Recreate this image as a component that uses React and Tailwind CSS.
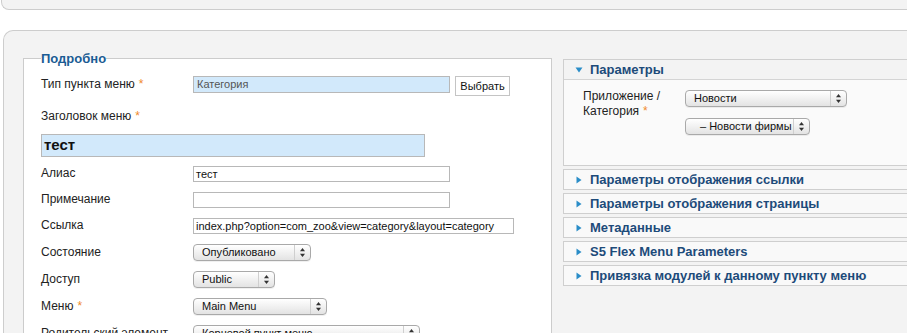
import React from "react";

const Star = () => <span className="text-[#f08a2c] text-[12px] align-top ml-[4px]">*</span>;

const Arrows = () => (
  <svg width="5" height="9" viewBox="0 0 5 9" className="block">
    <path d="M2.5 0 L5 3.2 L0 3.2 Z" fill="#333" />
    <path d="M2.5 9 L5 5.8 L0 5.8 Z" fill="#333" />
  </svg>
);

const Select = ({ w, children }) => (
  <div
    className={`relative flex h-[17px] ${w} items-center rounded-[4px] border border-[#a9a9a9] bg-gradient-to-b from-white to-[#e3e3e3] pl-[8px] text-[11px] leading-none text-[#111] shadow-[0_1px_0_rgba(0,0,0,0.06)]`}
  >
    <span className="flex-1 overflow-hidden whitespace-nowrap">{children}</span>
    <div className="flex h-full w-[16px] shrink-0 items-center justify-center border-l border-[#cfcfcf]">
      <Arrows />
    </div>
  </div>
);

const TriRight = () => (
  <svg width="6" height="8" viewBox="0 0 6 8" className="block">
    <path d="M0.5 0.5 L5.5 4 L0.5 7.5 Z" fill="#2a8dc8" />
  </svg>
);

const TriDown = () => (
  <svg width="8" height="6" viewBox="0 0 8 6" className="block">
    <path d="M0.5 0.5 L7.5 0.5 L4 5.5 Z" fill="#2a8dc8" />
  </svg>
);

const Collapsed = ({ children }) => (
  <div className="mt-[3px] flex h-[21px] items-center border border-r-0 border-[#cfcfcf] bg-[#f9f9f9] pl-[12px]">
    <TriRight />
    <span className="ml-[8px] text-[13px] font-bold text-[#1d4b7a]">{children}</span>
  </div>
);

export default function App() {
  const font = { fontFamily: '"Liberation Sans", Arial, sans-serif' };
  return (
    <div className="h-[333px] w-[907px] overflow-hidden bg-white text-[#222]" style={font}>
      <div className="ml-[1px] h-[10px] rounded-bl-[8px] border-b border-l border-[#cdcdcd] bg-[#f3f3f3]" />
      <div className="ml-[3px] mt-[20px] flex h-[320px] items-start rounded-tl-[10px] border-l border-t border-[#cdcdcd] bg-[#f3f3f3] pl-[19px] pt-[20px]">
        <fieldset className="m-0 h-[320px] w-[529px] shrink-0 border border-[#cccccc] bg-white pl-[17px] pr-0 pt-0">
          <legend className="px-0 text-[13px] font-bold leading-[15px] text-[#1b5c94]">Подробно</legend>
          <div className="mt-[10px] flex flex-col">
            <div className="flex h-[32px] items-start">
              <div className="w-[152px] text-[12px] leading-[17px]">
                Тип пункта меню<Star />
              </div>
              <div className="flex h-[17px] w-[257px] items-center border border-[#b8b8b8] bg-[#d2e9fb] pl-[3px] text-[11px] text-[#555]">
                Категория
              </div>
              <div className="ml-[5px] flex h-[20px] w-[55px] items-center justify-center border border-[#c4c4c4] bg-white text-[11px] text-[#111]">
                Выбрать
              </div>
            </div>
            <div className="h-[26px] text-[12px] leading-[17px]">
              Заголовок меню<Star />
            </div>
            <div className="h-[32px]">
              <div className="flex h-[23px] w-[384px] items-center border border-[#b8b8b8] bg-[#d2e9fb] pl-[2px] text-[15px] font-bold text-[#111]">
                тест
              </div>
            </div>
            <div className="flex h-[26px] items-start">
              <div className="w-[152px] text-[12px] leading-[15px]">Алиас</div>
              <div className="flex h-[16px] w-[257px] items-center border border-[#b8b8b8] bg-white pl-[2px] text-[11px] text-[#111]">
                тест
              </div>
            </div>
            <div className="flex h-[26px] items-start">
              <div className="w-[152px] text-[12px] leading-[15px]">Примечание</div>
              <div className="h-[16px] w-[257px] border border-[#b8b8b8] bg-white" />
            </div>
            <div className="flex h-[26px] items-start">
              <div className="w-[152px] text-[12px] leading-[15px]">Ссылка</div>
              <div className="flex h-[16px] w-[321px] items-center border border-[#b8b8b8] bg-white pl-[2px] text-[11px] text-[#111] whitespace-nowrap">
                index.php?option=com_zoo&amp;view=category&amp;layout=category
              </div>
            </div>
            <div className="flex h-[27px] items-start">
              <div className="w-[152px] text-[12px] leading-[16px]">Состояние</div>
              <Select w="w-[118px]">Опубликовано</Select>
            </div>
            <div className="flex h-[27px] items-start">
              <div className="w-[152px] text-[12px] leading-[16px]">Доступ</div>
              <Select w="w-[82px]">Public</Select>
            </div>
            <div className="flex h-[27px] items-start">
              <div className="w-[152px] text-[12px] leading-[16px]">
                Меню<Star />
              </div>
              <Select w="w-[134px]">Main Menu</Select>
            </div>
            <div className="flex h-[27px] items-start">
              <div className="w-[152px] text-[12px] leading-[16px]">Родительский элемент</div>
              <Select w="w-[227px]">Корневой пункт меню</Select>
            </div>
          </div>
        </fieldset>
        <div className="ml-[11px] mt-[8px] flex-1">
          <div className="border border-r-0 border-[#cfcfcf]">
            <div className="flex h-[20px] items-center border-b border-[#d4d4d4] bg-[#f3f3f3] pl-[11px]">
              <TriDown />
              <span className="ml-[7px] text-[13px] font-bold text-[#1d4b7a]">Параметры</span>
            </div>
            <div className="flex h-[85px] bg-[#fafafa] pl-[19px]">
              <div className="w-[102px] pt-[9px] text-[12px] leading-[15px]">
                Приложение /<br />
                Категория<Star />
              </div>
              <div className="flex flex-col pt-[10px]">
                <Select w="w-[162px]">Новости</Select>
                <div className="mt-[11px]">
                  <Select w="w-[125px]">
                    <span className="pl-[6px]">– Новости фирмы</span>
                  </Select>
                </div>
              </div>
            </div>
          </div>
          <Collapsed>Параметры отображения ссылки</Collapsed>
          <Collapsed>Параметры отображения страницы</Collapsed>
          <Collapsed>Метаданные</Collapsed>
          <Collapsed>S5 Flex Menu Parameters</Collapsed>
          <Collapsed>Привязка модулей к данному пункту меню</Collapsed>
        </div>
      </div>
    </div>
  );
}
